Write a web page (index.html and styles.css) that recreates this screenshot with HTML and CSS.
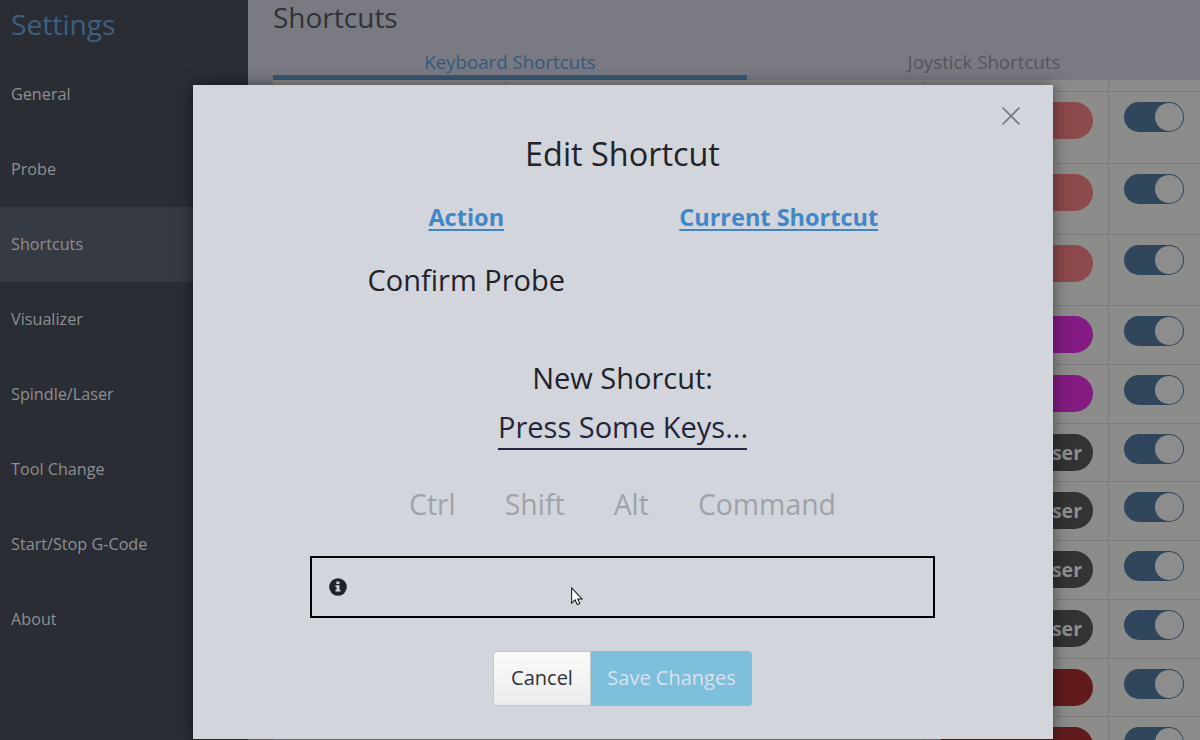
FILE: index.html
```html
<!DOCTYPE html>
<html lang="en">
<head>
<meta charset="utf-8">
<title>Settings</title>
<link rel="stylesheet" href="styles.css">
</head>
<body>
<div class="app">
  <nav class="sidebar">
    <h1 class="brand">Settings</h1>
    <a class="nav-item">General</a>
    <a class="nav-item">Probe</a>
    <a class="nav-item active">Shortcuts</a>
    <a class="nav-item">Visualizer</a>
    <a class="nav-item">Spindle/Laser</a>
    <a class="nav-item">Tool Change</a>
    <a class="nav-item">Start/Stop G-Code</a>
    <a class="nav-item">About</a>
  </nav>
  <main class="main">
    <h2 class="page-title">Shortcuts</h2>
    <div class="tabs">
      <div class="tab selected">Keyboard Shortcuts</div>
      <div class="tab">Joystick Shortcuts</div>
    </div>
    <div class="table">
      <div class="row head"><div></div><div></div><div></div><div></div></div>
      <div class="row tall"><div></div><div></div><div><span class="pill rose"></span></div><div><span class="toggle"></span></div></div>
      <div class="row mid"><div></div><div></div><div><span class="pill rose"></span></div><div><span class="toggle"></span></div></div>
      <div class="row mid"><div></div><div></div><div><span class="pill rose"></span></div><div><span class="toggle"></span></div></div>
      <div class="row"><div></div><div></div><div><span class="pill purple"></span></div><div><span class="toggle"></span></div></div>
      <div class="row"><div></div><div></div><div><span class="pill purple"></span></div><div><span class="toggle"></span></div></div>
      <div class="row short"><div></div><div></div><div><span class="pill gray">Spindle/Laser</span></div><div><span class="toggle"></span></div></div>
      <div class="row"><div></div><div></div><div><span class="pill gray">Spindle/Laser</span></div><div><span class="toggle"></span></div></div>
      <div class="row"><div></div><div></div><div><span class="pill gray">Spindle/Laser</span></div><div><span class="toggle"></span></div></div>
      <div class="row"><div></div><div></div><div><span class="pill gray">Spindle/Laser</span></div><div><span class="toggle"></span></div></div>
      <div class="row short"><div></div><div></div><div><span class="pill red"></span></div><div><span class="toggle"></span></div></div>
      <div class="row"><div></div><div></div><div><span class="pill red"></span></div><div><span class="toggle"></span></div></div>
    </div>
  </main>
</div>

<section class="modal">
  <svg class="close" viewBox="0 0 20 20"><path d="M1.5 1.5L18.5 18.5M18.5 1.5L1.5 18.5"/></svg>
  <h2 class="modal-title">Edit Shortcut</h2>
  <div class="columns">
    <div class="column"><h3 class="label">Action</h3><p class="value">Confirm Probe</p></div>
    <div class="column"><h3 class="label">Current Shortcut</h3></div>
  </div>
  <p class="new-label">New Shorcut:</p>
  <p class="prompt">Press Some Keys...</p>
  <div class="keys"><span>Ctrl</span><span>Shift</span><span>Alt</span><span>Command</span></div>
  <div class="info">
    <svg class="info-icon" viewBox="0 0 18 18"><circle cx="9" cy="9" r="8.8"/><path d="M7.4 3.4h3v2.5h-3zM6.5 7.2h3.9v4.6h1.1v1.7h-5v-1.7h1.1V8.9H6.5z"/></svg>
  </div>
  <div class="actions"><button class="btn cancel">Cancel</button><button class="btn save">Save Changes</button></div>
</section>
<svg class="cursor" viewBox="0 0 13 20"><path d="M.7 .8V17.2L4.4 13.7L6.8 18.8L9.5 17.6L7.2 12.6H12z"/></svg>
</body>
</html>
```

FILE: styles.css
```css
* { box-sizing: border-box; }
body { margin: 0; width: 1200px; height: 740px; overflow: hidden; position: relative; font-family: "Open Sans", sans-serif; }
h1, h2, h3, p { margin: 0; font-weight: 400; }
.app { display: flex; height: 740px; overflow: hidden; }
.sidebar { width: 248px; flex: none; background: #2a2d34; }
.brand { height: 57px; padding-left: 11px; font-size: 28.2px; line-height: 48px; color: #3d5f80; }
.nav-item { display: flex; align-items: center; height: 75px; padding: 0 0 2px 11px; font-size: 16.2px; color: #8e8f91; }
.nav-item.active { background: #363a43; }
.main { flex: 1; min-width: 0; padding-left: 25px; background: #797a82; overflow: hidden; }
.page-title { height: 45px; font-size: 28px; line-height: 34px; color: #303236; }
.tabs { display: flex; width: 948px; height: 35px; }
.tab { flex: 1; text-align: center; font-size: 18.7px; line-height: 34px; color: #54565a; }
.tab.selected { color: #36597a; border-bottom: 5px solid #36597a; }
.table { width: 948px; background: #8c8c8a; }
.row { display: grid; grid-template-columns: 233px 418px 185px 1fr; height: 59px; border-bottom: 1px solid #7a7b7b; }
.row > div { padding-top: 10px; border-right: 1px solid #7a7b7b; }
.row.head { height: 12px; }
.row.tall { height: 72px; }
.row.mid { height: 71px; }
.row.short { height: 58px; }
.pill { display: block; width: 153px; height: 37px; margin-left: 16px; padding-right: 11px; border-radius: 19px; text-align: right; font-size: 19.5px; font-weight: 700; line-height: 38px; color: #8f8f90; }
.rose { background: #8d4a4c; }
.purple { background: #831b83; }
.gray { background: #333; }
.red { background: #611b1d; }
.toggle { display: block; width: 60px; height: 30px; margin-left: 15px; padding: 1px 1px 1px 31px; border-radius: 15px; background: #2f465c; }
.toggle::after { content: ""; display: block; width: 28px; height: 28px; border-radius: 50%; background: #8d8d8e; }
.modal { position: absolute; left: 193px; top: 85px; width: 860px; height: 654px; padding: 43px 118px 0 117px; background: #d2d5dc; box-shadow: 0 0 15px rgba(0,0,0,.5); color: #212328; text-align: center; }
.close { position: absolute; right: 32px; top: 21px; width: 20px; height: 20px; fill: none; stroke: #75777c; stroke-width: 1.6; }
.modal-title { font-size: 32.4px; line-height: 50px; }
.columns { display: flex; height: 134px; margin-top: 22px; }
.column { flex: 1; }
.label { font-size: 23.5px; font-weight: 700; line-height: 34px; color: #3f87c8; text-decoration: underline; text-decoration-thickness: 2px; text-underline-offset: 3px; }
.value { margin-top: 24px; font-size: 29px; line-height: 44px; }
.new-label { margin-top: 22px; font-size: 29px; line-height: 44px; }
.prompt { width: 249px; height: 43px; margin: 7px auto 0; font-size: 29px; line-height: 40px; color: #23263a; border-bottom: 2px solid #23263a; white-space: nowrap; }
.keys { display: flex; justify-content: center; gap: 49px; margin-top: 33px; font-size: 28.4px; line-height: 43px; height: 44px; color: #9fa2a9; }
.info { display: flex; align-items: center; height: 62px; margin-top: 29px; padding: 0 0 1px 17px; border: 2px solid #000; }
.info-icon { width: 18px; height: 18px; fill: #212328; }
.info-icon path { fill: #d2d5dc; }
.actions { display: flex; justify-content: center; margin-top: 33px; }
.btn { height: 55px; padding: 0 0 2px; border: 0; font: 20px "Open Sans", sans-serif; }
.cancel { width: 98px; border: 1px solid #c5c7cc; border-radius: 4px 0 0 4px; background: linear-gradient(#fafaf8, #ececee); color: #303338; }
.save { width: 161px; border-radius: 0 4px 4px 0; background: #7ebfdb; color: #d8e2f0; }
.cursor { position: absolute; left: 571px; top: 587px; width: 12px; height: 19px; fill: #fff; stroke: #111; stroke-width: 1.1; }
```
